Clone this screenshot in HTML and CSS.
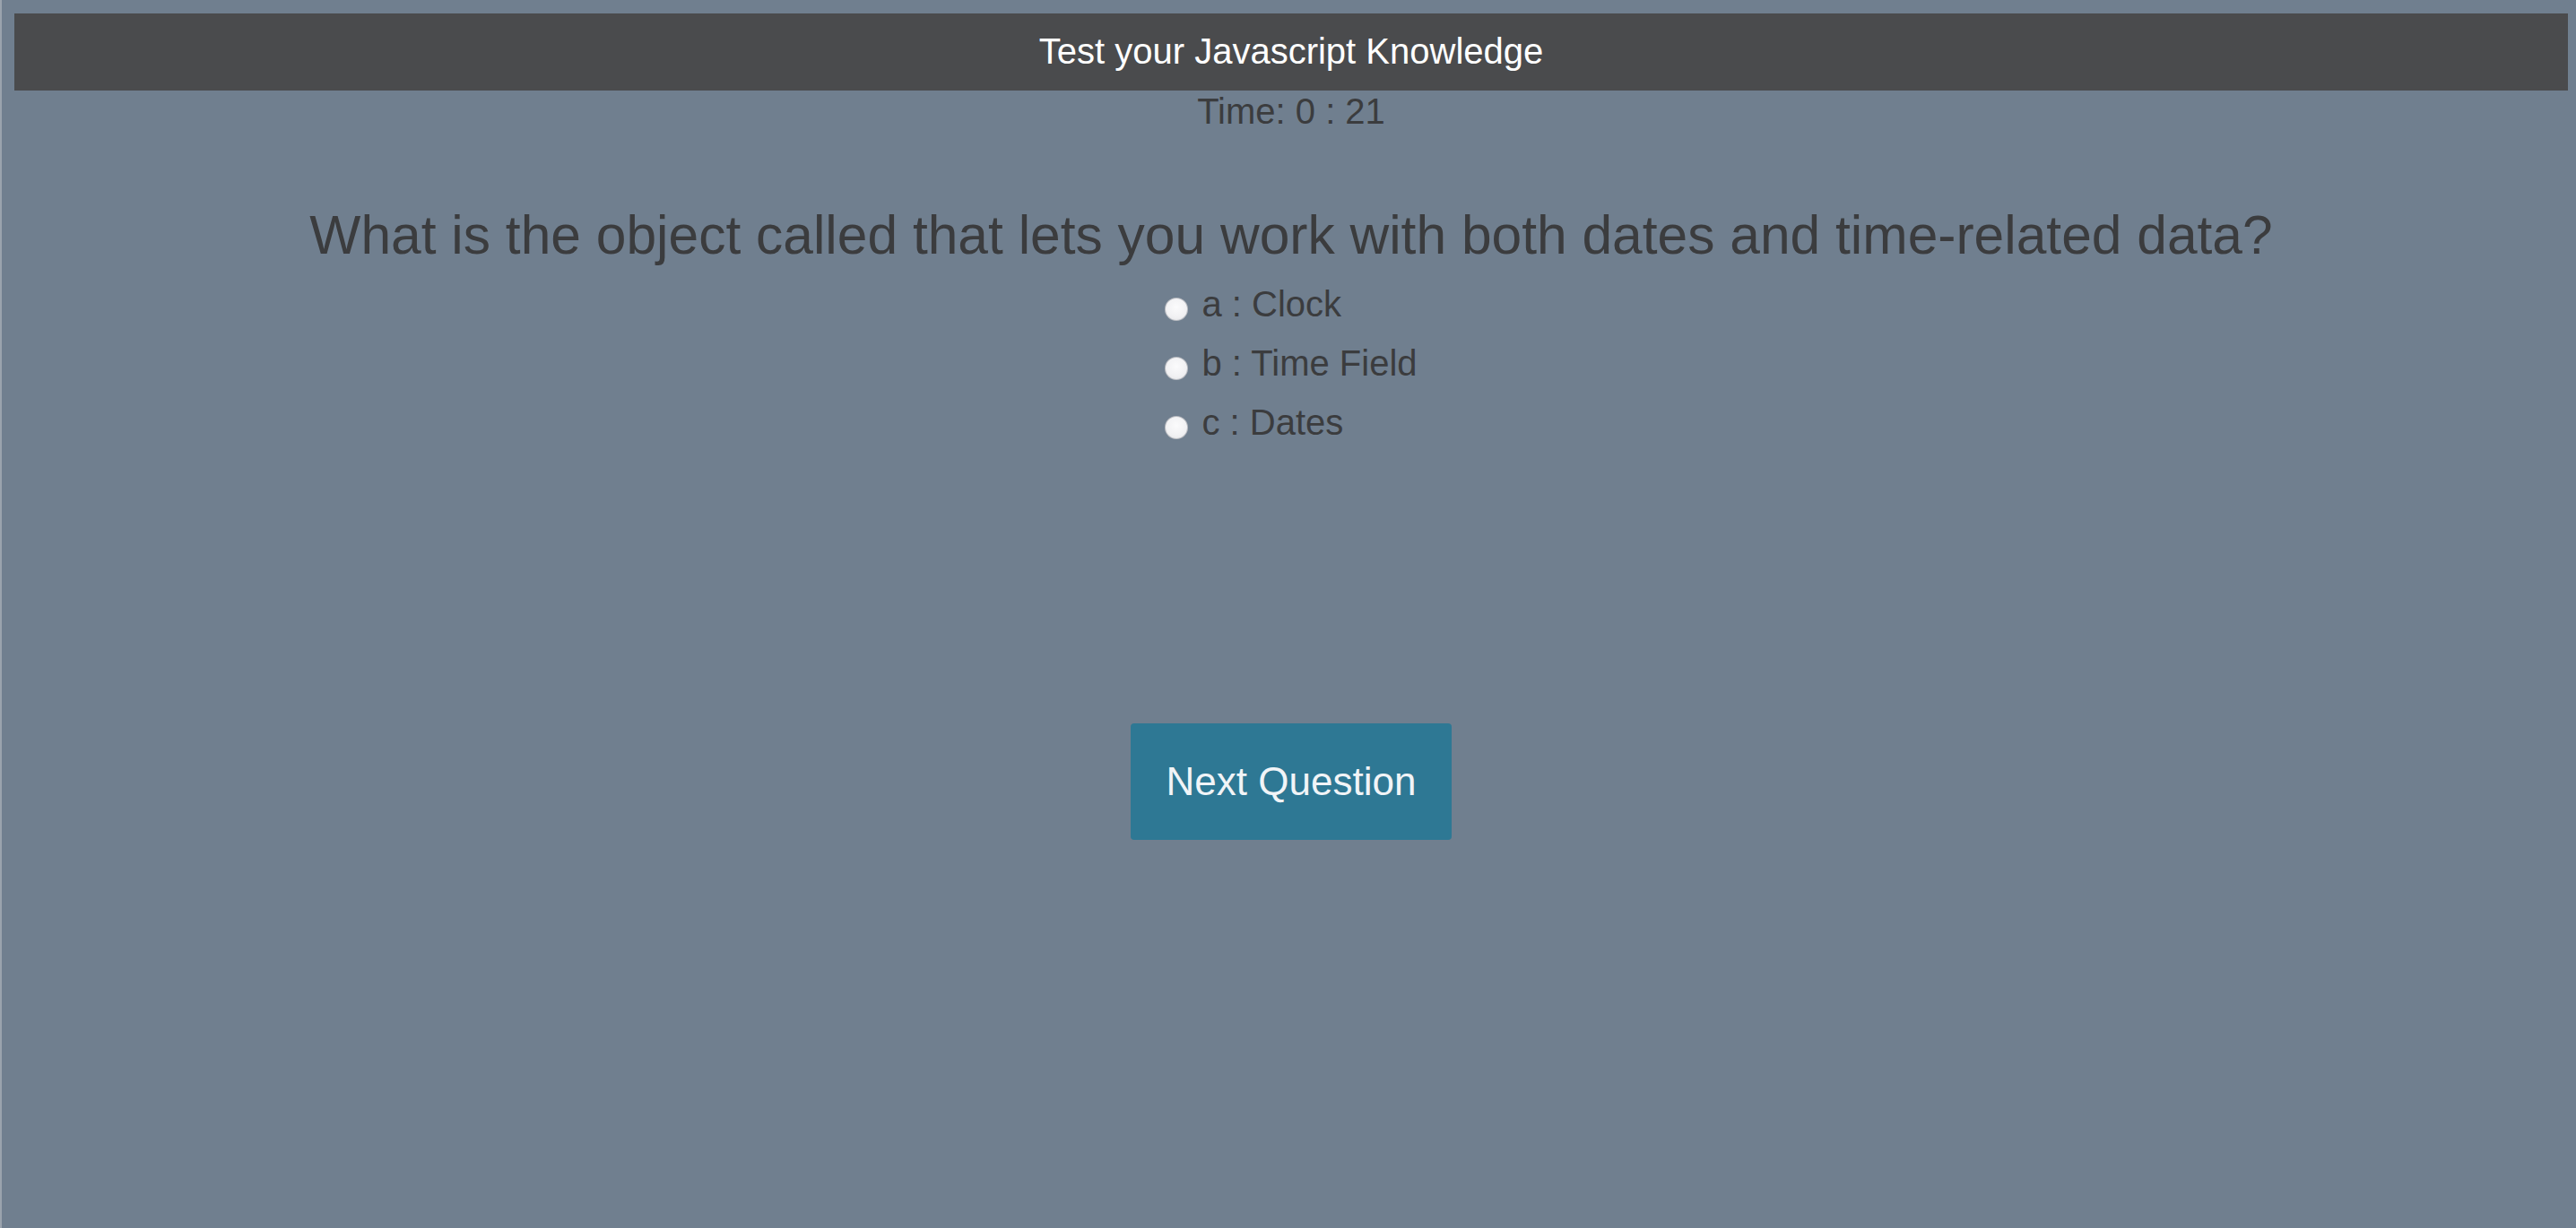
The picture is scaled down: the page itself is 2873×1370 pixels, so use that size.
FILE: index.html
```html
<!DOCTYPE html>
<html lang="en">
<head>
<meta charset="utf-8">
<title>Test your Javascript Knowledge</title>
<link rel="stylesheet" href="styles.css">
</head>
<body>
  <header class="topbar">Test your Javascript Knowledge</header>
  <div class="timer">Time: 0 : 21</div>
  <main class="quiz">
    <h2 class="question">What is the object called that lets you work with both dates and time-related data?</h2>
    <div class="options">
      <label class="option"><input class="radio" type="radio" name="answer" value="a"><span>a : Clock</span></label>
      <label class="option"><input class="radio" type="radio" name="answer" value="b"><span>b : Time Field</span></label>
      <label class="option"><input class="radio" type="radio" name="answer" value="c"><span>c : Dates</span></label>
    </div>
    <button class="next-btn" type="button">Next Question</button>
  </main>
</body>
</html>
```
FILE: styles.css
```css
html {
  background: #707f8f;
}
body {
  margin: 0;
  min-height: 1370px;
  box-sizing: border-box;
  padding: 15px 9px 0 14px;
  border-left: 2px solid #9aa3ad;
  font-family: "Liberation Sans", Arial, Helvetica, sans-serif;
  color: #3b3c3e;
}
.topbar {
  height: 86px;
  background: #4a4b4d;
  color: #ffffff;
  font-size: 40px;
  line-height: 84px;
  text-align: center;
}
.timer {
  font-size: 40px;
  line-height: 46px;
  text-align: center;
  color: #3b3c3e;
}
.quiz {
  display: flex;
  flex-direction: column;
  align-items: center;
}
.question {
  margin: 81px 0 0;
  font-size: 60.5px;
  font-weight: normal;
  line-height: 69px;
  color: #3b3c3e;
  text-align: center;
}
.options {
  margin-top: 9px;
  display: flex;
  flex-direction: column;
  align-items: flex-start;
}
.option {
  display: flex;
  align-items: center;
  height: 66px;
  font-size: 40px;
  line-height: 66px;
  color: #3b3c3e;
}
.radio {
  appearance: none;
  -webkit-appearance: none;
  width: 26px;
  height: 26px;
  margin: 12px 15px 0 0;
  border-radius: 50%;
  border: 1px solid rgba(90, 95, 105, 0.35);
  background: radial-gradient(circle at 50% 40%, #fbfbfc 0%, #f1f1f3 60%, #e2e3e6 100%);
  box-sizing: border-box;
}
.next-btn {
  margin-top: 303px;
  padding: 40px 40px;
  border: none;
  border-radius: 4px;
  background: #2e7894;
  color: #f1f4f7;
  font-family: "Liberation Sans", Arial, Helvetica, sans-serif;
  font-size: 44px;
  line-height: 50px;
}
```
